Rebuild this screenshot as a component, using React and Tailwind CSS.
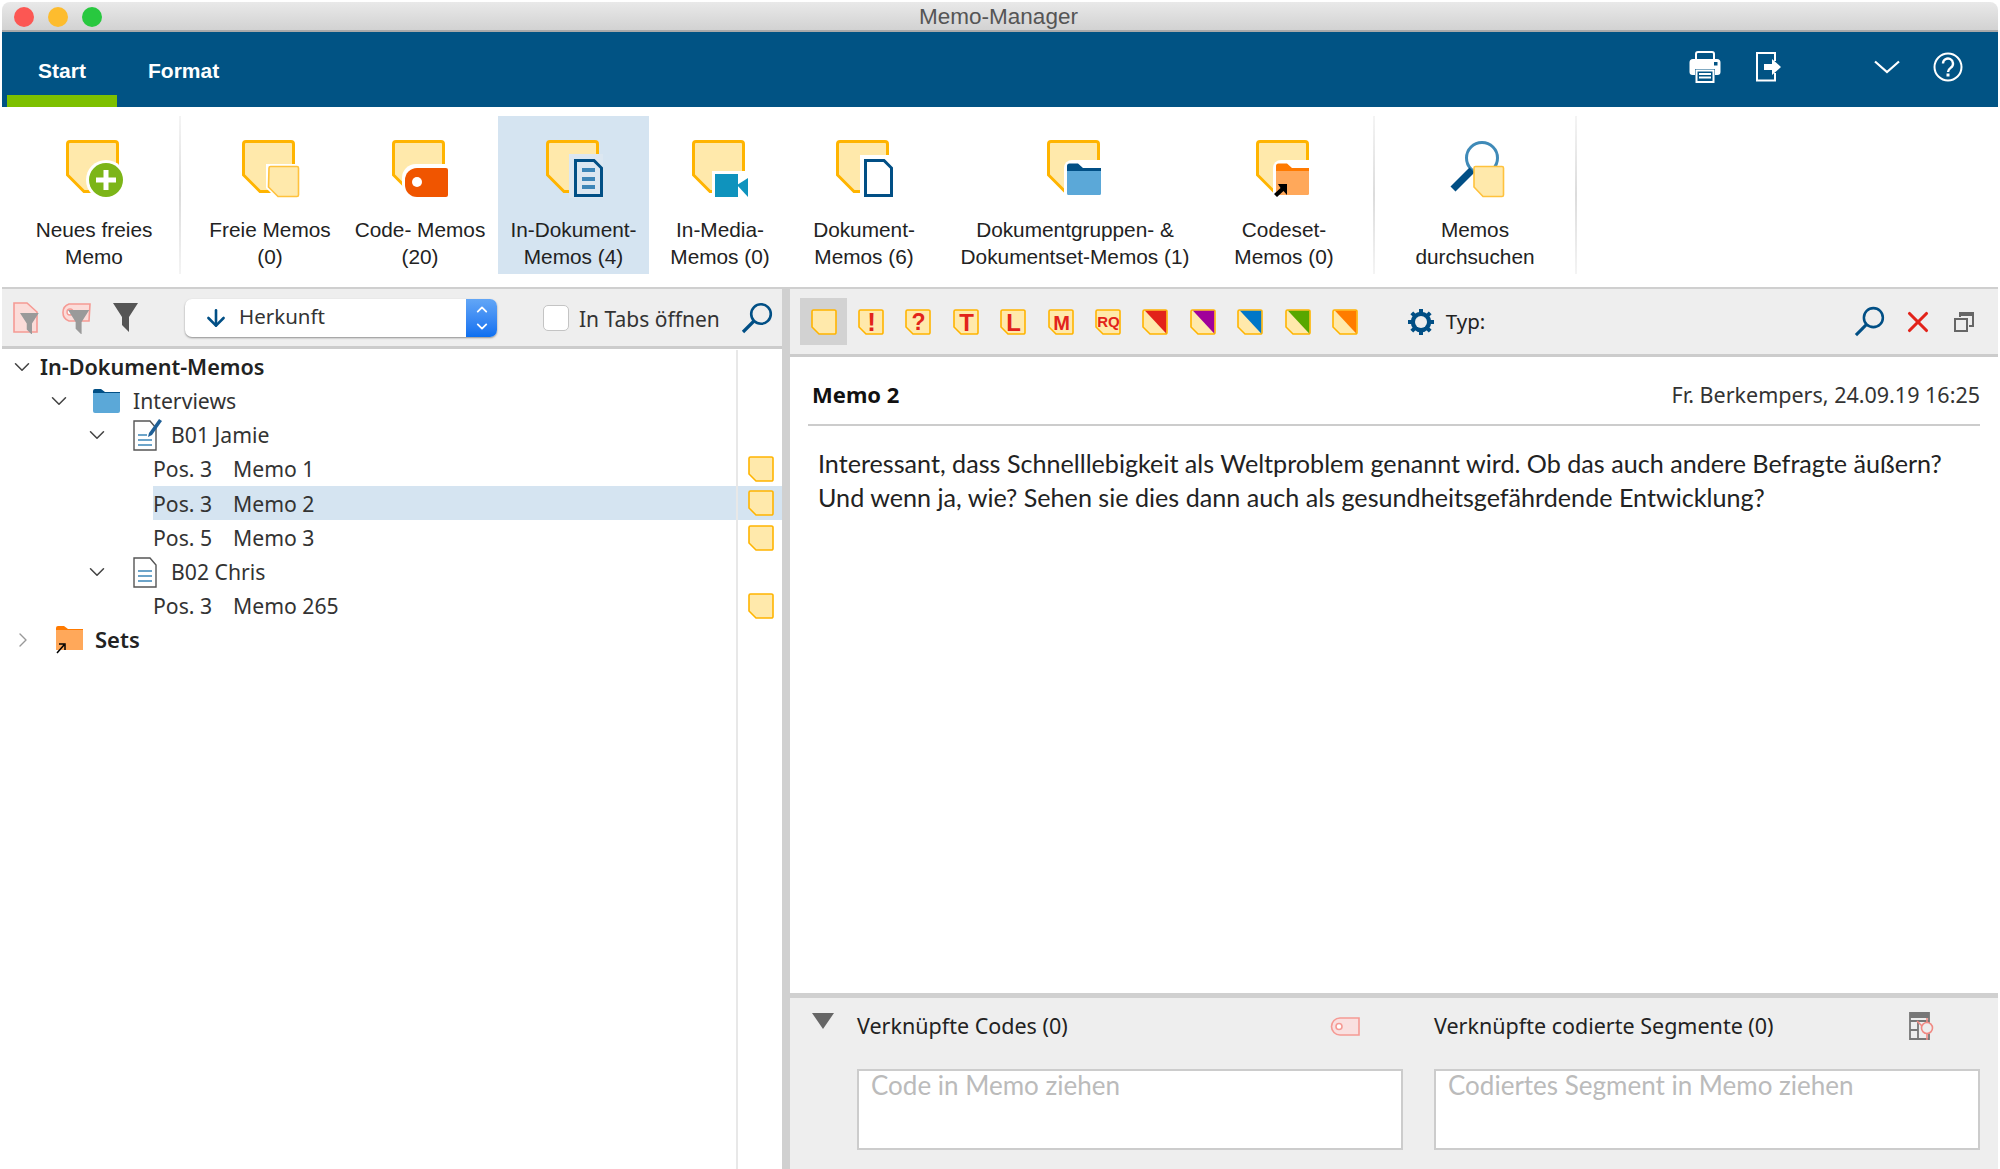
import React from 'react';
import { ChevronDown, ChevronRight, ChevronUp, ArrowDown, X } from 'lucide-react';

const BIG_NOTE = 'M6 3.5 H51 a2.5 2.5 0 0 1 2.5 2.5 V53.5 H20 L3.5 37 V6 a2.5 2.5 0 0 1 2.5 -2.5 Z';
const SMALL_NOTE = 'M2.5 1 H23.5 a1.5 1.5 0 0 1 1.5 1.5 V23.5 a1.5 1.5 0 0 1 -1.5 1.5 H8 L1 18 V2.5 a1.5 1.5 0 0 1 1.5 -1.5 Z';

const SmallNote = ({ size = 26, className = '', children }) => (
  <svg width={size} height={size} viewBox="0 0 26 26" className={className}>
    <path d={SMALL_NOTE} fill="#ffe9ab" stroke="#ffb400" strokeWidth="1.6" />
    {children}
  </svg>
);

// big ribbon icon: note in the back, coloured thing on top
const RibbonIcon = ({ children }) => (
  <svg width="60" height="60" viewBox="0 0 60 60" className="shrink-0">
    <path d={BIG_NOTE} fill="#ffe9ab" stroke="#ffb400" strokeWidth="3" />
    {children}
  </svg>
);

const ribbonItems = [
  {
    lines: ['Freie Memos', '(0)'], w: 'w-[144px] ml-[17px]',
    icon: (
      <g>
        <path d="M26 26 H60 V60 H36 L26 50 Z" fill="#fff" />
        <path d="M29 30 a1.5 1.5 0 0 1 1.5 -1.5 H57 a1.5 1.5 0 0 1 1.5 1.5 V57 a1.5 1.5 0 0 1 -1.5 1.5 H38 L28.5 49 Z" fill="#ffe9ab" stroke="#ffc23d" strokeWidth="1.6" />
      </g>
    ),
  },
  {
    lines: ['Code- Memos', '(20)'], w: 'w-[156px]',
    icon: (
      <g>
        <path d="M12 40 a14 14 0 0 1 14 -14 H59 V60 H26 a14 14 0 0 1 -14 -14 Z" fill="#fff" />
        <path d="M15 42 a12 12 0 0 1 12 -12 H56 a2 2 0 0 1 2 2 V57 a2 2 0 0 1 -2 2 H27 a12 12 0 0 1 -12 -12 Z" fill="#f05500" />
        <circle cx="27" cy="44" r="5" fill="#fff" />
      </g>
    ),
  },
  {
    lines: ['In-Dokument-', 'Memos (4)'], w: 'w-[151px]', active: true,
    icon: (
      <g>
        <rect x="25" y="16" width="34" height="44" fill="#dce7f1" />
        <path d="M31.5 22.5 H50 L57.5 30 V57.5 H31.5 Z" fill="#dce7f1" stroke="#014f85" strokeWidth="3" />
        <rect x="38" y="30" width="13" height="4" fill="#3d86b8" />
        <rect x="38" y="39" width="13" height="4" fill="#3d86b8" />
        <rect x="38" y="47" width="13" height="4" fill="#3d86b8" />
      </g>
    ),
  },
  {
    lines: ['In-Media-', 'Memos (0)'], w: 'w-[142px]',
    icon: (
      <g>
        <rect x="22" y="33" width="38" height="27" fill="#fff" />
        <rect x="25" y="36" width="23" height="23" fill="#0f93bd" />
        <path d="M47 47 L58 40 V59 Z" fill="#0f93bd" />
      </g>
    ),
  },
  {
    lines: ['Dokument-', 'Memos (6)'], w: 'w-[146px]',
    icon: (
      <g>
        <rect x="26" y="17" width="34" height="43" fill="#fff" />
        <path d="M31.5 22.5 H50 L57.5 30 V57.5 H31.5 Z" fill="#fff" stroke="#014f85" strokeWidth="3" />
      </g>
    ),
  },
  {
    lines: ['Dokumentgruppen- &', 'Dokumentset-Memos (1)'], w: 'w-[276px]',
    icon: (
      <g>
        <path d="M19 30 a8 8 0 0 1 8 -8 H60 V60 H19 Z" fill="#fff" />
        <path d="M22 28 a2.5 2.5 0 0 1 2.5 -2.5 H33 L38 30 H56 V36 H22 Z" fill="#014f85" />
        <path d="M22 33 H56 V55.5 a1.5 1.5 0 0 1 -1.5 1.5 H23.5 a1.5 1.5 0 0 1 -1.5 -1.5 Z" fill="#5ba8d8" />
      </g>
    ),
  },
  {
    lines: ['Codeset-', 'Memos (0)'], w: 'w-[142px]',
    icon: (
      <g>
        <path d="M19 30 a8 8 0 0 1 8 -8 H59 V60 H19 Z" fill="#fff" />
        <path d="M22 28 a2.5 2.5 0 0 1 2.5 -2.5 H33 L38 30 H55 V36 H22 Z" fill="#ff7a00" />
        <path d="M22 33 H55 V55.5 a1.5 1.5 0 0 1 -1.5 1.5 H22 Z" fill="#ffa85a" />
        <path d="M24 46 H33 V57 L29.5 53 L23 59 L20 56 L26.5 50 Z" fill="#000" />
      </g>
    ),
  },
];

const SearchRibbonIcon = () => (
  <svg width="60" height="60" viewBox="0 0 60 60" className="shrink-0">
    <circle cx="37" cy="20" r="15.5" fill="none" stroke="#3f8ab8" strokeWidth="3" />
    <path d="M27 32 L8 51" stroke="#014f85" strokeWidth="7" />
    <path d="M29 30 a1.5 1.5 0 0 1 1.5 -1.5 H57 a1.5 1.5 0 0 1 1.5 1.5 V57 a1.5 1.5 0 0 1 -1.5 1.5 H38 L29 49 Z" fill="#ffe9ab" stroke="#ffc23d" strokeWidth="1.6" />
  </svg>
);

const RibbonItem = ({ lines, icon, w, active, extra }) => (
  <div className={`${w} h-[158px] pt-[22px] flex flex-col items-center shrink-0 ${active ? 'bg-[#d5e4f1]' : ''}`}>
    {extra || <RibbonIcon>{icon}</RibbonIcon>}
    <div className="mt-[19px] text-center text-[20.8px] leading-[26.5px] text-[#222] whitespace-nowrap font-['Liberation_Sans',sans-serif]">
      {lines[0]}<br />{lines[1]}
    </div>
  </div>
);

const Separator = () => <div className="w-[2px] h-[158px] bg-gradient-to-b from-[#f4f4f4] via-[#dcdcdc] to-[#f4f4f4] shrink-0" />;

const MagnifierIcon = ({ size = 32 }) => (
  <svg width={size} height={size} viewBox="0 0 32 32" className="shrink-0">
    <circle cx="20" cy="12" r="9.8" fill="none" stroke="#014f85" strokeWidth="2.6" />
    <path d="M13 19 L2 30" stroke="#014f85" strokeWidth="3.2" />
  </svg>
);

const GearIcon = () => (
  <svg width="28" height="28" viewBox="0 0 28 28" className="shrink-0">
    <circle cx="14" cy="14" r="8" fill="none" stroke="#014f85" strokeWidth="4.6" />
    <path d="M14 1 V27 M1 14 H27 M4.8 4.8 L23.2 23.2 M23.2 4.8 L4.8 23.2" stroke="#014f85" strokeWidth="4" />
    <circle cx="14" cy="14" r="6" fill="#eeeeee" />
  </svg>
);

const FunnelShape = ({ fill }) => <path d="M0 0 H25 L16 14 V29 L9 22 V14 Z" fill={fill} />;

const treeRows = [
  { type: 'root', label: 'In-Dokument-Memos' },
  { type: 'folder', label: 'Interviews' },
  { type: 'doc', label: 'B01 Jamie', edit: true },
  { type: 'memo', pos: 'Pos. 3', label: 'Memo 1' },
  { type: 'memo', pos: 'Pos. 3', label: 'Memo 2', active: true },
  { type: 'memo', pos: 'Pos. 5', label: 'Memo 3' },
  { type: 'doc', label: 'B02 Chris' },
  { type: 'memo', pos: 'Pos. 3', label: 'Memo 265' },
  { type: 'sets', label: 'Sets' },
];

const DocIcon = ({ edit }) => (
  <svg width="30" height="32" viewBox="0 0 30 32" className="shrink-0">
    <path d="M1 2 H17 L23 9 V31 H1 Z" fill="#fff" stroke="#555" strokeWidth="1.4" />
    {edit ? (
      <g>
        <path d="M5 16 H14 M5 21 H19 M5 26 H19" stroke="#3d86b8" strokeWidth="1.6" />
        <path d="M26 0 L29 2 L19 16 L15 18 L16 14 Z" fill="#1f5f96" />
      </g>
    ) : (
      <path d="M5 15 H19 M5 20 H19 M5 25 H19" stroke="#3d86b8" strokeWidth="1.6" />
    )}
  </svg>
);

const TreeChevron = ({ ml }) => <ChevronDown className={`${ml} w-[26px] h-[26px] text-[#444] shrink-0`} strokeWidth={1.4} />;

const TreeRow = ({ row }) => {
  const text = "text-[21.2px] text-[#333] whitespace-nowrap";
  let content = null;
  if (row.type === 'root') {
    content = (
      <>
        <TreeChevron ml="ml-[7px]" />
        <span className="ml-[5px] text-[21.6px] font-semibold text-[#222] whitespace-nowrap">{row.label}</span>
      </>
    );
  } else if (row.type === 'folder') {
    content = (
      <>
        <TreeChevron ml="ml-[44px]" />
        <svg width="27" height="24" viewBox="0 0 27 24" className="ml-[21px] shrink-0">
          <path d="M0 2 a2 2 0 0 1 2 -2 H8 L12 3 H27 V8 H0 Z" fill="#014f85" />
          <path d="M0 4 H27 V22 a2 2 0 0 1 -2 2 H2 a2 2 0 0 1 -2 -2 Z" fill="#5ba8d8" />
        </svg>
        <span className={`ml-[13px] ${text}`}>{row.label}</span>
      </>
    );
  } else if (row.type === 'doc') {
    content = (
      <>
        <TreeChevron ml="ml-[82px]" />
        <div className="ml-[23px] shrink-0"><DocIcon edit={row.edit} /></div>
        <span className={`ml-[8px] ${text}`}>{row.label}</span>
      </>
    );
  } else if (row.type === 'memo') {
    content = (
      <div className={`ml-[151px] h-full flex-1 flex items-center ${row.active ? 'bg-[#d5e4f1]' : ''}`}>
        <span className={`w-[80px] ${text}`}>{row.pos}</span>
        <span className={text}>{row.label}</span>
      </div>
    );
  } else {
    content = (
      <>
        <ChevronRight className="ml-[9px] w-[24px] h-[26px] text-[#999] shrink-0" strokeWidth={1.4} />
        <svg width="30" height="28" viewBox="0 0 30 28" className="ml-[19px] shrink-0">
          <path d="M2 2 a2 2 0 0 1 2 -2 H10 L14 3 H29 V8 H2 Z" fill="#ff7a00" />
          <path d="M2 4 H29 V24 H2 Z" fill="#ffa85a" />
          <path d="M3 27 L10 19 M5 18 H11 V24" fill="none" stroke="#000" strokeWidth="1.5" />
        </svg>
        <span className="ml-[11px] text-[22px] font-semibold text-[#222]">{row.label}</span>
      </>
    );
  }
  return (
    <div className="h-[34.1px] flex items-stretch">
      <div className="w-[734px] flex items-center">{content}</div>
      <div className={`flex-1 border-l-2 border-[#e8e8e8] flex items-center pl-[10px] ${row.active ? 'bg-[#d5e4f1]' : ''}`}>
        {row.type === 'memo' && <SmallNote size={26} />}
      </div>
    </div>
  );
};

const LETTERS = [
  { t: '!', s: 26, y: 22 }, { t: '?', s: 23, y: 21 }, { t: 'T', s: 24, y: 21.5 }, { t: 'L', s: 24, y: 21.5 }, { t: 'M', s: 20, y: 20.5 }, { t: 'RQ', s: 15, y: 18 },
];
const CORNERS = ['#e2231a', '#a0009a', '#0077c8', '#58a700', '#ff7c00'];

const NoteToolbar = () => (
  <div className="flex items-center">
    <div className="w-[47.4px] h-[47px] bg-[#d2d2d2] flex items-center justify-center"><SmallNote /></div>
    {LETTERS.map((l) => (
      <div key={l.t} className="w-[47.4px] h-[47px] flex items-center justify-center">
        <SmallNote>
          <text x="13.5" y={l.y} textAnchor="middle" fontSize={l.s} fontWeight="700" fill="#e2231a" fontFamily="'Liberation Sans', sans-serif">{l.t}</text>
        </SmallNote>
      </div>
    ))}
    {CORNERS.map((c) => (
      <div key={c} className="w-[47.4px] h-[47px] flex items-center justify-center">
        <SmallNote>
          <path d="M3 1.8 H24.2 V24.5 Z" fill={c} />
        </SmallNote>
      </div>
    ))}
  </div>
);

export default function App() {
  return (
    <div className="w-[2000px] h-[1169px] bg-white px-[2px] pt-[2px] flex flex-col overflow-hidden font-['Noto_Sans',sans-serif]">
      {/* title bar */}
      <div className="h-[30px] rounded-t-[8px] bg-gradient-to-b from-[#e9e9e9] to-[#d2d2d2] border-b-2 border-[#a9a9a9] relative flex items-center justify-center shrink-0">
        <div className="absolute left-[12px] top-[5px] flex gap-[14px]">
          <div className="w-[20px] h-[20px] rounded-full bg-[#fc5753]" />
          <div className="w-[20px] h-[20px] rounded-full bg-[#fdbc2e]" />
          <div className="w-[20px] h-[20px] rounded-full bg-[#28c83f]" />
        </div>
        <span className="pr-[3px] pt-[1px] text-[22.5px] text-[#555] font-['Liberation_Sans',sans-serif]">Memo-Manager</span>
      </div>

      {/* blue tab bar */}
      <div className="h-[75px] bg-[#015384] flex items-stretch shrink-0 relative font-['Liberation_Sans',sans-serif]">
        <div className="ml-[5px] w-[110px] flex flex-col">
          <div className="flex-1 flex items-center justify-center pt-[15px] text-[21px] font-bold text-white">Start</div>
          <div className="h-[12px] bg-[#7dc000]" />
        </div>
        <div className="ml-[31px] flex items-center pt-[3px] text-[21px] font-bold text-white">Format</div>
        <div className="ml-auto flex items-center pb-[6px] pr-[35px] text-white">
          <svg width="32" height="32" viewBox="0 0 32 32" className="shrink-0">
            <path d="M7 8 V3 a2 2 0 0 1 2 -2 H23 a2 2 0 0 1 2 2 V8" fill="none" stroke="#fff" strokeWidth="2" />
            <path d="M4 8 H28 a3.5 3.5 0 0 1 3.5 3.5 V21 a3 3 0 0 1 -3 3 H26 V18 H6 V24 H3.5 a3 3 0 0 1 -3 -3 V11.5 A3.5 3.5 0 0 1 4 8 Z" fill="#fff" />
            <rect x="25" y="11" width="3.5" height="3.5" fill="#015384" />
            <rect x="7.5" y="19.5" width="17" height="11.5" fill="#015384" stroke="#fff" strokeWidth="2" />
            <path d="M10 23 H22 M10 26.5 H22" stroke="#fff" strokeWidth="2" />
          </svg>
          <svg width="26" height="30" viewBox="0 0 26 30" className="ml-[35px] shrink-0">
            <path d="M19 9 V1 H1 V28.5 H19 V21" fill="none" stroke="#fff" strokeWidth="2" />
            <path d="M8 12 H16 V7 L25 15 L16 23 V18 H8 Z" fill="#fff" />
          </svg>
          <svg width="26" height="14" viewBox="0 0 26 14" className="ml-[92px] shrink-0">
            <path d="M1 1.5 L13 12 L25 1.5" fill="none" stroke="#fff" strokeWidth="2.2" />
          </svg>
          <svg width="30" height="30" viewBox="0 0 30 30" className="ml-[33px] shrink-0">
            <circle cx="15" cy="15" r="13.5" fill="none" stroke="#fff" strokeWidth="2" />
            <path d="M10 11.5 a5 5 0 1 1 8 4 c-2 1.5 -3 2.2 -3 4.5" fill="none" stroke="#fff" strokeWidth="2.4" />
            <rect x="13.5" y="21.5" width="3" height="3" fill="#fff" />
          </svg>
        </div>
      </div>

      {/* ribbon */}
      <div className="h-[182px] border-b-2 border-[#cfcfcf] pt-[9px] flex items-start shrink-0">
        <div className="w-[177px] pl-[7px] shrink-0">
          <RibbonItem
            w="w-full"
            lines={['Neues freies', 'Memo']}
            icon={(
              <g>
                <circle cx="42" cy="42" r="20" fill="#fff" />
                <circle cx="42" cy="42" r="17" fill="#7cb518" />
                <path d="M42 32 V52 M32 42 H52" stroke="#fff" strokeWidth="5" />
              </g>
            )}
          />
        </div>
        <Separator />
        {ribbonItems.map((item) => <RibbonItem key={item.lines[0]} {...item} />)}
        <div className="w-[18px] shrink-0" />
        <Separator />
        <RibbonItem w="w-[200px]" lines={['Memos', 'durchsuchen']} extra={<SearchRibbonIcon />} />
        <Separator />
      </div>

      <div className="flex-1 flex min-h-0">
        {/* left panel */}
        <div className="w-[780px] shrink-0 flex flex-col">
          <div className="h-[60px] bg-[#eeeeee] border-b-[3px] border-[#cccccc] flex items-center shrink-0">
            <svg width="26" height="32" viewBox="0 0 26 32" className="ml-[11px] shrink-0">
              <path d="M1 1 H14 L24 10 V30 H1 Z" fill="#fbdcd9" stroke="#f59a94" strokeWidth="1.6" />
              <g transform="translate(7 11) scale(0.75)"><FunnelShape fill="#9a9a9a" /></g>
            </svg>
            <svg width="34" height="32" viewBox="0 0 34 32" className="ml-[18px] shrink-0">
              <path d="M33 2 H12 a9 9 0 0 0 0 17 H32 Z" fill="#fbdcd9" stroke="#f59a94" strokeWidth="1.6" />
              <circle cx="13" cy="10" r="3" fill="#fff" stroke="#f59a94" strokeWidth="1.4" />
              <g transform="translate(11 8) scale(0.85)"><FunnelShape fill="#9a9a9a" /></g>
            </svg>
            <svg width="25" height="30" viewBox="0 0 25 30" className="ml-[22px] shrink-0"><FunnelShape fill="#555" /></svg>

            <div className="ml-[47px] w-[312px] h-[38px] rounded-[7px] bg-white shadow-[0_1px_2px_rgba(0,0,0,0.4)] flex items-center overflow-hidden shrink-0">
              <ArrowDown className="ml-[18px] w-[26px] h-[26px] text-[#014f85] shrink-0" strokeWidth={2.4} />
              <span className="ml-[10px] pb-[2px] text-[20.5px] text-[#333]">Herkunft</span>
              <div className="ml-auto w-[31px] h-full bg-gradient-to-b from-[#62a6f6] to-[#0a6ff0] flex flex-col items-center justify-center text-white">
                <ChevronUp className="w-[20px] h-[17px]" strokeWidth={2.6} />
                <ChevronDown className="w-[20px] h-[17px]" strokeWidth={2.6} />
              </div>
            </div>

            <div className="ml-[46px] w-[26px] h-[26px] rounded-[5px] bg-white border border-[#c4c4c4] shrink-0" />
            <span className="ml-[10px] pt-[5px] text-[21px] text-[#333] whitespace-nowrap">In Tabs öffnen</span>
            <div className="ml-[21px]"><MagnifierIcon /></div>
          </div>
          <div className="flex-1 bg-white pt-[1px] flex flex-col">
            {treeRows.map((row) => <TreeRow key={row.label} row={row} />)}
            <div className="flex-1 flex">
              <div className="w-[734px]" />
              <div className="flex-1 border-l-2 border-[#e8e8e8]" />
            </div>
          </div>
        </div>

        {/* divider */}
        <div className="w-[8px] bg-[#d0d0d0] shrink-0" />

        {/* right panel */}
        <div className="flex-1 flex flex-col min-w-0">
          <div className="h-[68px] bg-[#eeeeee] border-b-[3px] border-[#cccccc] flex items-start pt-[9px] pl-[10px] shrink-0">
            <NoteToolbar />
            <div className="flex items-center h-[47px] ml-[38px] flex-1">
              <GearIcon />
              <span className="ml-[11px] text-[20.5px] text-[#222]">Typ:</span>
              <div className="ml-auto"><MagnifierIcon size={31} /></div>
              <X className="ml-[16px] w-[34px] h-[34px] text-[#e2231a] shrink-0" strokeWidth={2.2} />
              <svg width="20" height="20" viewBox="0 0 20 20" className="ml-[19px] mr-[24px] shrink-0">
                <path d="M1 7 H13 V19 H1 Z" fill="none" stroke="#666" strokeWidth="2" />
                <path d="M6 5 V1 H19 V14 H15" fill="none" stroke="#666" strokeWidth="2" />
                <path d="M6 1 H19 V4 H6 Z" fill="#666" />
              </svg>
            </div>
          </div>

          <div className="flex-1 bg-white px-[18px] min-h-0">
            <div className="h-[69px] pt-[8px] border-b-2 border-[#cccccc] flex items-center justify-between">
              <span className="pl-[4px] text-[22px] font-bold text-[#111]">Memo 2</span>
              <span className="pt-[2px] text-[21.5px] text-[#333]">Fr. Berkempers, 24.09.19 16:25</span>
            </div>
            <div className="pt-[20px] pl-[10px] text-[25.15px] leading-[34.4px] text-[#222] whitespace-nowrap font-['Lato',sans-serif]">
              Interessant, dass Schnelllebigkeit als Weltproblem genannt wird. Ob das auch andere Befragte äußern?<br />
              Und wenn ja, wie? Sehen sie dies dann auch als gesundheitsgefährdende Entwicklung?
            </div>
          </div>

          <div className="h-[176px] bg-[#eeeeee] border-t-[5px] border-[#d0d0d0] shrink-0 relative">
            <div className="flex h-full pl-[67px] pr-[18px] gap-[31px] pt-[14px]">
              <div className="absolute left-[22px] top-[15px] w-0 h-0 border-l-[11px] border-r-[11px] border-t-[16px] border-l-transparent border-r-transparent border-t-[#666]" />
              <LinkBox
                title="Verknüpfte Codes (0)"
                placeholder="Code in Memo ziehen"
                icon={(
                  <svg width="30" height="19" viewBox="0 0 30 19" className="mr-[43px] shrink-0">
                    <path d="M29 1 H10 a8.5 8.5 0 0 0 0 17 H29 Z" fill="#f9e0e0" stroke="#f59a94" strokeWidth="1.6" />
                    <circle cx="9" cy="9.5" r="3" fill="#fff" stroke="#f59a94" strokeWidth="1.6" />
                  </svg>
                )}
              />
              <LinkBox
                title="Verknüpfte codierte Segmente (0)"
                placeholder="Codiertes Segment in Memo ziehen"
                icon={(
                  <svg width="28" height="28" viewBox="0 0 28 28" className="mr-[43px] shrink-0">
                    <path d="M1 1 H20 V27 H1 Z M1 9 H20 M1 18 H9 M9 9 V27" fill="none" stroke="#777" strokeWidth="1.8" />
                    <path d="M1 1 H20 V6 H1 Z" fill="#777" />
                    <circle cx="18" cy="16" r="5.5" fill="#eee" stroke="#f08a84" strokeWidth="1.6" />
                    <path d="M18 6 V10.5 M18 21.5 V28 M8 9 L13 14" stroke="#f08a84" strokeWidth="1.6" />
                  </svg>
                )}
              />
            </div>
          </div>
        </div>
      </div>
    </div>
  );
}

function LinkBox({ title, placeholder, icon }) {
  return (
    <div className="w-[548px] flex flex-col">
      <div className="h-[28px] flex items-center justify-between">
        <span className="text-[21.5px] text-[#222] whitespace-nowrap">{title}</span>
        {icon}
      </div>
      <div className="mt-[29px] h-[81px] bg-white border-2 border-[#cccccc] px-[12px] text-[26px] leading-[29px] text-[#bbbbbb] whitespace-nowrap font-['Lato',sans-serif]">
        {placeholder}
      </div>
    </div>
  );
}
